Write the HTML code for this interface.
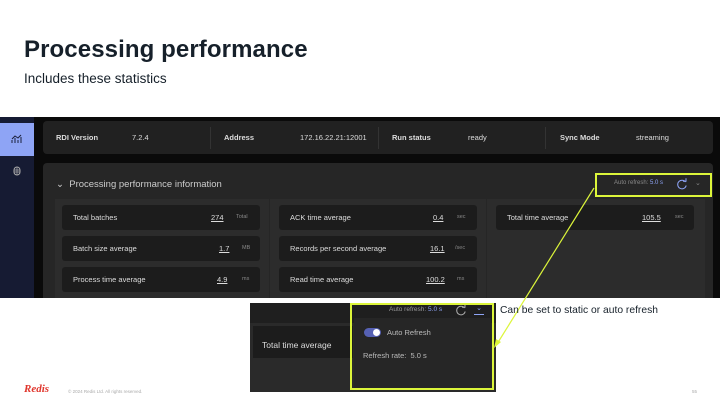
<!DOCTYPE html>
<html><head><style>
*{margin:0;padding:0;box-sizing:border-box}
body{width:720px;height:405px;background:#fff;position:relative;overflow:hidden;font-family:"Liberation Sans",sans-serif}
.a{position:absolute}
.card{position:absolute;background:#1c1c1c;border-radius:3px;color:#ddd;font-size:7.5px}
.card .l{position:absolute;left:11px;top:8px}
.card .v{position:absolute;top:8px;text-decoration:underline;color:#ddd}
.card .u{position:absolute;top:9px;font-size:5.5px;color:#888}
.t{position:absolute;font-size:7.5px;color:#ddd}
</style></head><body>
<div class="a" style="left:24px;top:36px;font-size:24px;font-weight:bold;color:#16202a;letter-spacing:0.1px">Processing performance</div>
<div class="a" style="left:24px;top:71px;font-size:13.5px;color:#16202a">Includes these statistics</div>

<div class="a" style="left:0;top:117px;width:720px;height:181px;background:#0a0a0a"></div>
<div class="a" style="left:0;top:117px;width:34px;height:181px;background:#161b33"></div>
<div class="a" style="left:0;top:123px;width:34px;height:33px;background:#8ea4f5"></div>
<svg class="a" style="left:11px;top:134px" width="12" height="10"><path d="M1 9V6M4 9V4M7 9V6M10 9V3M1 5L4 2L7 4L10 1" stroke="#1a1f3a" fill="none" stroke-width="1"/></svg>
<svg class="a" style="left:13px;top:166px" width="8" height="10"><rect x="1" y="1" width="6" height="8" rx="3" stroke="#aaa" fill="none" stroke-width="1"/><path d="M1 4H7M1 6H7M4 1V9" stroke="#aaa" stroke-width=".7"/></svg>

<div class="a" style="left:43px;top:121px;width:670px;height:33px;background:#212121;border-radius:4px"></div>
<div class="t" style="left:56px;top:133px;font-weight:bold">RDI Version</div>
<div class="t" style="left:132px;top:133px">7.2.4</div>
<div class="a" style="left:210px;top:127px;width:1px;height:22px;background:#333"></div>
<div class="t" style="left:224px;top:133px;font-weight:bold">Address</div>
<div class="t" style="left:300px;top:133px">172.16.22.21:12001</div>
<div class="a" style="left:378px;top:127px;width:1px;height:22px;background:#333"></div>
<div class="t" style="left:392px;top:133px;font-weight:bold">Run status</div>
<div class="t" style="left:468px;top:133px">ready</div>
<div class="a" style="left:545px;top:127px;width:1px;height:22px;background:#333"></div>
<div class="t" style="left:560px;top:133px;font-weight:bold">Sync Mode</div>
<div class="t" style="left:636px;top:133px">streaming</div>

<div class="a" style="left:43px;top:163px;width:670px;height:135px;background:#262626;border-radius:4px 4px 0 0"></div>
<div class="a" style="left:55px;top:199px;width:650px;height:99px;background:#2c2c2c"></div>
<div class="a" style="left:269px;top:199px;width:1px;height:99px;background:#262626"></div>
<div class="a" style="left:486px;top:199px;width:1px;height:99px;background:#262626"></div>
<div class="t" style="left:56px;top:179px;font-size:9.5px;color:#ccc">⌄&nbsp; Processing performance information</div>
<div class="a" style="left:614px;top:180px;font-size:6px;color:#888">Auto refresh: <span style="color:#8ea4f5">5.0 s</span></div>
<svg class="a" style="left:676px;top:178px" width="12" height="12"><path d="M9.5 4A4.3 4.3 0 1 0 10.2 7.5" stroke="#8ea4f5" fill="none" stroke-width="1"/><path d="M7 3.3H10V0.3" stroke="#8ea4f5" fill="none" stroke-width="1"/></svg>
<div class="a" style="left:695px;top:179px;font-size:7px;color:#888">⌄</div>
<div class="a" style="left:595px;top:173px;width:117px;height:24px;border:2px solid #dcf53a"></div>

<div class="card" style="left:62px;top:205px;width:198px;height:25px"><span class="l">Total batches</span><span class="v" style="left:149px">274</span><span class="u" style="left:174px">Total</span></div>
<div class="card" style="left:62px;top:236px;width:198px;height:25px"><span class="l">Batch size average</span><span class="v" style="left:157px">1.7</span><span class="u" style="left:180px">MB</span></div>
<div class="card" style="left:62px;top:267px;width:198px;height:25px"><span class="l">Process time average</span><span class="v" style="left:155px">4.9</span><span class="u" style="left:180px">ms</span></div>
<div class="card" style="left:279px;top:205px;width:198px;height:25px"><span class="l">ACK time average</span><span class="v" style="left:154px">0.4</span><span class="u" style="left:178px">sec</span></div>
<div class="card" style="left:279px;top:236px;width:198px;height:25px"><span class="l">Records per second average</span><span class="v" style="left:151px">16.1</span><span class="u" style="left:176px">/sec</span></div>
<div class="card" style="left:279px;top:267px;width:198px;height:25px"><span class="l">Read time average</span><span class="v" style="left:147px">100.2</span><span class="u" style="left:178px">ms</span></div>
<div class="card" style="left:496px;top:205px;width:198px;height:25px"><span class="l">Total time average</span><span class="v" style="left:146px">105.5</span><span class="u" style="left:179px">sec</span></div>

<div class="a" style="left:250px;top:303px;width:246px;height:89px;background:#2a2a2a"></div>
<div class="a" style="left:250px;top:303px;width:246px;height:20px;background:#1f1f1f"></div>
<div class="a" style="left:253px;top:326px;width:100px;height:32px;background:#1c1c1c"></div>
<div class="t" style="left:262px;top:340px;font-size:8.5px">Total time average</div>
<div class="a" style="left:354px;top:318px;width:137px;height:70px;background:#262626"></div>
<div class="a" style="left:389px;top:306px;font-size:6.5px;color:#999">Auto refresh: <span style="color:#8ea4f5">5.0 s</span></div>
<svg class="a" style="left:455px;top:304px" width="12" height="12"><path d="M9.5 4A4.3 4.3 0 1 0 10.2 7.5" stroke="#aaa" fill="none" stroke-width="1"/><path d="M7 3.3H10V0.3" stroke="#aaa" fill="none" stroke-width="1"/></svg>
<div class="a" style="left:474px;top:305px;width:10px;height:10px;border-bottom:1px solid #8ea4f5;color:#8ea4f5;font-size:7px;text-align:center;line-height:7px">⌄</div>
<div class="a" style="left:364px;top:328px;width:17px;height:9px;border-radius:5px;background:#5661b3"></div>
<div class="a" style="left:373px;top:329px;width:7px;height:7px;border-radius:50%;background:#fff"></div>
<div class="a" style="left:387px;top:328px;font-size:7.5px;color:#bbb">Auto Refresh</div>
<div class="a" style="left:363px;top:351px;font-size:7.5px;color:#bbb">Refresh rate:&nbsp; 5.0 s</div>
<div class="a" style="left:350px;top:303px;width:144px;height:87px;border:2px solid #dcf53a"></div>

<svg class="a" style="left:0;top:0" width="720" height="405"><line x1="594" y1="188" x2="497" y2="344" stroke="#dcf53a" stroke-width="1.2"/><path d="M494 348L496 339L501 342Z" fill="#dcf53a"/></svg>
<div class="a" style="left:500px;top:305px;font-size:10.3px;color:#16202a">Can be set to static or auto refresh</div>

<div class="a" style="left:24px;top:383px;font-size:11px;font-weight:bold;font-style:italic;color:#e0352c;font-family:'Liberation Serif',serif">Redis</div>
<div class="a" style="left:68px;top:389px;font-size:4.5px;color:#aaa">© 2024 Redis Ltd. All rights reserved.</div>
<div class="a" style="left:692px;top:389px;font-size:4.5px;color:#aaa">55</div>
</body></html>
